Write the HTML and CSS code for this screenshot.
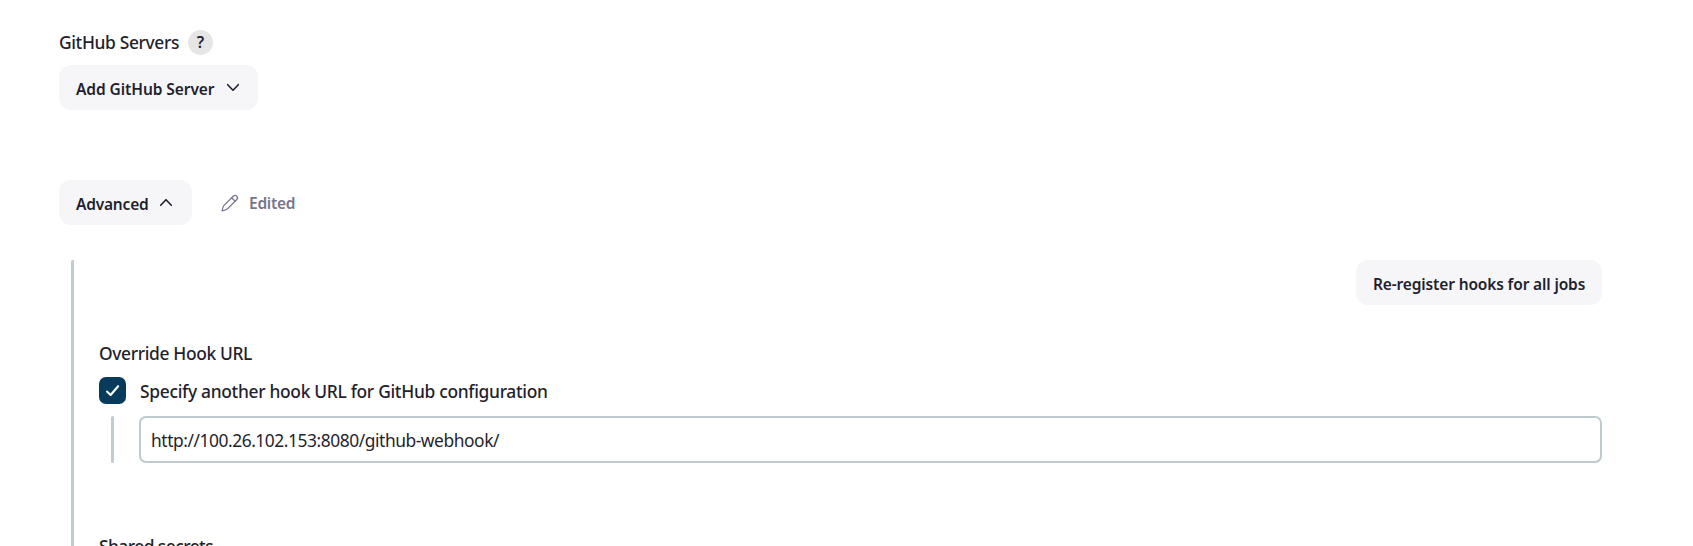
FILE: index.html
```html
<!DOCTYPE html>
<html lang="en">
<head>
<meta charset="utf-8">
<title>GitHub Servers</title>
<link rel="stylesheet" href="styles.css">
</head>
<body>
<main class="form">
  <div class="heading"><span class="label servers">GitHub Servers</span><span class="help">?</span></div>
  <button class="button add"><span class="add-text">Add GitHub Server</span>
    <svg class="chevron" viewBox="0 0 14 14"><path d="M1.700 4.700 7 10.200l5.300-5.500"/></svg>
  </button>
  <div class="advanced-row">
    <button class="button advanced"><span class="advanced-text">Advanced</span>
      <svg class="chevron" viewBox="0 0 14 14"><path d="M1.700 10.200 7 4.700l5.300 5.500"/></svg>
    </button>
    <svg class="pencil" viewBox="0 0 20 20"><path d="M13.200 3.200 3.800 12.600Q2.700 13.800 2.100 17.900 6 17.200 7.200 16.100L16.600 6.700C19 4.200 15.700 .900 13.200 3.200ZM11.700 4.700l3.500 3.500"/></svg>
    <span class="edited">Edited</span>
  </div>
  <section class="panel">
    <div class="actions"><button class="button hooks"><span class="hooks-text">Re-register hooks for all jobs</span></button></div>
    <div class="label override">Override Hook URL</div>
    <label class="check">
      <span class="box"><svg viewBox="0 0 27 27"><path d="m8 14.600 3.600 3.400 7.500-8.800"/></svg></span>
      <span class="label specify">Specify another hook URL for GitHub configuration</span>
    </label>
    <div class="nested"><div class="input"><span class="url">http://100.26.102.153:8080/github-webhook/</span></div></div>
    <div class="label secrets">Shared secrets</div>
  </section>
</main>
</body>
</html>
```
FILE: styles.css
```css
* { box-sizing: border-box; }
body {
  margin: 0;
  height: 546px;
  overflow: hidden;
  background: #fff;
  color: #1f1f2e;
  font-family: "Noto Sans", "Open Sans", sans-serif;
}
svg { fill: none; stroke-linecap: round; stroke-linejoin: round; flex: none; }
.form { padding: 30px 91px 0 59px; }
.heading { display: flex; align-items: center; height: 25px; gap: 9px; }
.label { font-size: 17.4px; font-weight: 500; line-height: 25px; letter-spacing: -.36px; white-space: nowrap; }
.servers { width: 120px; }
.help {
  width: 25px; height: 25px; border-radius: 50%;
  background: #e6e6e7; text-align: center;
  font-size: 16px; line-height: 25px; font-weight: 600;
}
.button {
  display: flex; align-items: center; height: 45px; padding: 3px 17px 0;
  border: 0; border-radius: 12px; background: #f6f6f9; color: inherit;
  font: 600 15.5px/24px "Noto Sans", "Open Sans", sans-serif; white-space: nowrap;
}
.add { width: 199px; margin-top: 10px; letter-spacing: -.07px; }
.add-text { width: 139px; text-align: left; }
.chevron { width: 14px; height: 14px; margin: -4px 0 0 11px; stroke: #1f1f2e; stroke-width: 1.600; }
.advanced-row { display: flex; align-items: center; margin-top: 70px; height: 45px; }
.advanced { width: 133px; letter-spacing: -.2px; }
.advanced-text { width: 72px; text-align: left; }
.pencil { width: 20px; height: 20px; margin-left: 28px; stroke: #77758c; stroke-width: 1.300; }
.edited { margin-left: 9px; color: #77758c; font-size: 15.5px; font-weight: 600; line-height: 24px; letter-spacing: -.25px; }
.panel {
  margin: 35px 0 0 12px; padding-left: 25px; height: 310px;
  border-left: 3px solid #c1cbd0; border-top-left-radius: 2px;
}
.actions { display: flex; justify-content: flex-end; }
.hooks { width: 246px; letter-spacing: -.14px; }
.override { margin-top: 36px; }
.check { display: flex; align-items: center; gap: 14px; height: 27px; margin-top: 11px; }
.box { width: 27px; height: 27px; border-radius: 7px; background: #073b5c; }
.specify { padding-top: 1px; letter-spacing: -.31px; }
.box svg { display: block; width: 27px; height: 27px; stroke: #fff; stroke-width: 2.1; }
.nested {
  position: relative; margin: 12px 0 0 12px; padding-left: 28px; height: 47px;
}
.nested::before {
  content: ""; position: absolute; left: 0; top: 0;
  width: 3px; height: 47px; border-radius: 2px; background: #c1cbd0;
}
.input {
  height: 47px; padding: 9px 10px; border: 2px solid #bfcbce; border-radius: 7px;
  font-size: 17.4px; line-height: 26px; letter-spacing: -.45px; white-space: nowrap;
}
.secrets { margin-top: 71px; letter-spacing: -.55px; }
```
